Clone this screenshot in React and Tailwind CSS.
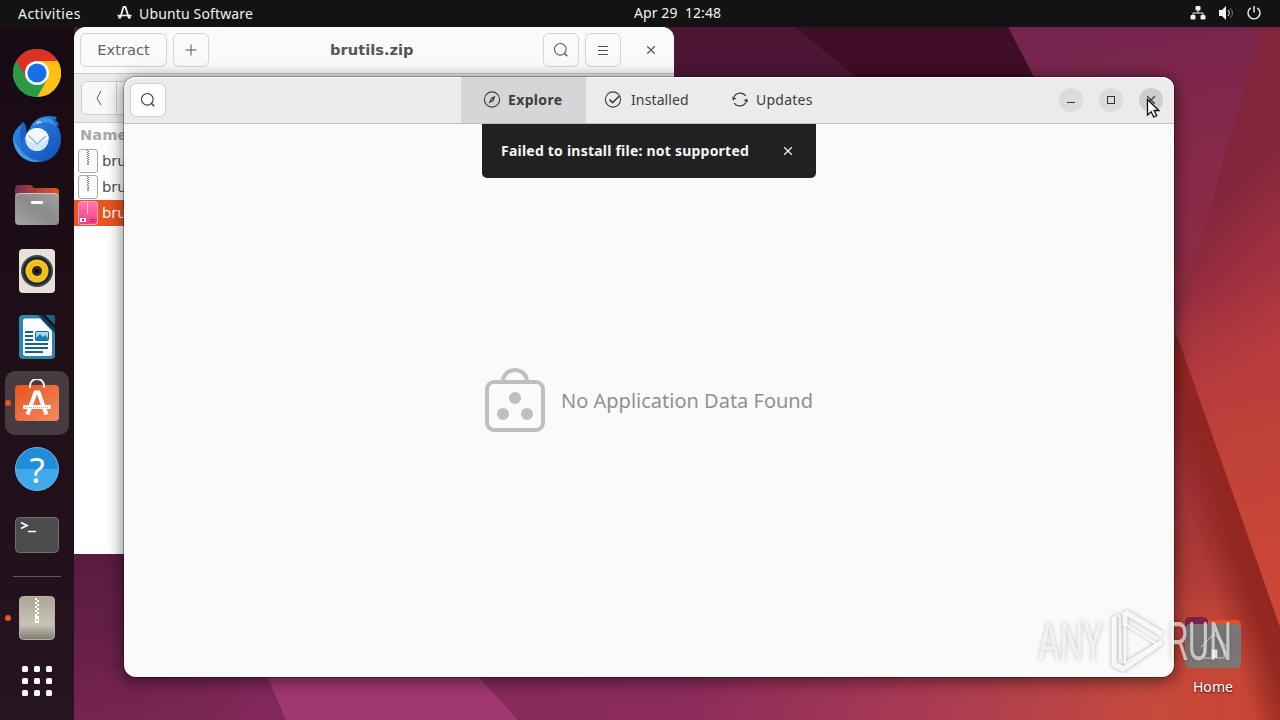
import React from "react";

const Wallpaper = () => (
  <svg className="absolute inset-0" width="1280" height="720" viewBox="0 0 1280 720">
    <defs>
      <linearGradient id="base" x1="0" y1="0" x2="0" y2="1">
        <stop offset="0" stopColor="#4b1534" />
        <stop offset="0.75" stopColor="#571a3d" />
        <stop offset="0.88" stopColor="#651f45" />
        <stop offset="1" stopColor="#76244f" />
      </linearGradient>
      <linearGradient id="floor" x1="74" y1="0" x2="1280" y2="0" gradientUnits="userSpaceOnUse">
        <stop offset="0" stopColor="#76244f" stopOpacity="0" />
        <stop offset="0.15" stopColor="#80285a" />
        <stop offset="0.5" stopColor="#8b2b5c" />
        <stop offset="0.7" stopColor="#a93a54" />
        <stop offset="0.9" stopColor="#c74a3d" />
        <stop offset="1" stopColor="#c84230" />
      </linearGradient>
      <linearGradient id="sky" x1="1010" y1="27" x2="1130" y2="700" gradientUnits="userSpaceOnUse">
        <stop offset="0" stopColor="#73244f" />
        <stop offset="0.2" stopColor="#84284a" />
        <stop offset="0.5" stopColor="#932e42" />
        <stop offset="0.8" stopColor="#ab3836" />
        <stop offset="1" stopColor="#c94b38" />
      </linearGradient>
      <linearGradient id="fold" x1="1190" y1="220" x2="1300" y2="330" gradientUnits="userSpaceOnUse">
        <stop offset="0" stopColor="#81253c" />
        <stop offset="0.5" stopColor="#9e3040" />
        <stop offset="1" stopColor="#b63a40" />
      </linearGradient>
      <linearGradient id="foldBottom" x1="1200" y1="290" x2="1275" y2="590" gradientUnits="userSpaceOnUse">
        <stop offset="0" stopColor="#b63b3c" stopOpacity="0" />
        <stop offset="0.5" stopColor="#bf4139" />
        <stop offset="1" stopColor="#cc4737" />
      </linearGradient>
      <linearGradient id="ridge" x1="1195" y1="540" x2="1262" y2="518" gradientUnits="userSpaceOnUse">
        <stop offset="0" stopColor="#8e241f" stopOpacity="0" />
        <stop offset="0.5" stopColor="#8e2520" stopOpacity="0.9" />
        <stop offset="1" stopColor="#94271f" />
      </linearGradient>
    </defs>
    <rect width="1280" height="720" fill="url(#base)" />
    <path d="M795 27H1060V90H872Z" fill="#3e0d26" />
    <path d="M74 670H1280V720H74Z" fill="url(#floor)" />
    <path d="M260 660H463L518 720H286Z" fill="#a23870" />
    <path d="M1008 27H1280V677H1160L1034 77Z" fill="url(#sky)" />
    <path d="M1174 600H1280V720H1174Z" fill="#c64736" opacity=".35" />
    <path d="M1262 27H1280V627L1175 330Z" fill="url(#fold)" />
    <path d="M1262 27H1280V627L1175 330Z" fill="url(#foldBottom)" />
    <path d="M1175 330L1280 627V720H1248L1170 440Z" fill="url(#ridge)" />
  </svg>
);

const SoftwareGlyph = () => (
  <svg width="16" height="16" viewBox="0 0 16 16" fill="none" stroke="#f2f2f2" strokeWidth="1.800">
    <path d="M3 13.500L6.500 2h2L12 13.500" strokeLinejoin="round" />
    <path d="M.5 10.500h14M2 10.500v3M13 10.500v3" strokeWidth="1.500" />
  </svg>
);

const SearchIcon = ({ color = "#3d3d3d" }) => (
  <svg width="16" height="16" viewBox="0 0 16 16" fill="none" stroke={color} strokeWidth="1.100">
    <circle cx="7.300" cy="7.300" r="5.800" />
    <path d="M11.300 11.300l3 3" strokeWidth="1.500" />
  </svg>
);

const CloseIcon = ({ color = "#3d3d3d" }) => (
  <svg width="10" height="10" viewBox="0 0 10 10" fill="none" stroke={color} strokeWidth="1.300">
    <path d="M1.200 1.200l7.600 7.600M8.800 1.200L1.200 8.800" />
  </svg>
);

const TopBar = () => (
  <header className="relative z-10 h-[27px] bg-[#131313] text-[#f2f2f2] text-[14px] leading-[27px] flex justify-between">
    <div className="flex w-[560px]">
      <span className="ml-[18px] w-[99px] tracking-[0.45px]">Activities</span>
      <span className="w-[22px] pt-[5px]"><SoftwareGlyph /></span>
      <span className="tracking-[0.15px]">Ubuntu Software</span>
    </div>
    <div className="absolute left-[634px] -top-px whitespace-pre tracking-[0.08px]">Apr 29  12:48</div>
    <div className="flex items-center gap-[12px] pr-[18px] pb-px">
      <svg width="16" height="16" viewBox="0 0 16 16" fill="#f2f2f2">
        <rect x="5.500" y="1" width="5" height="4.500" rx="1" />
        <rect x=".5" y="10" width="5" height="4.500" rx="1" />
        <rect x="10.500" y="10" width="5" height="4.500" rx="1" />
        <path d="M8 4v4M3 11V8h10v3" fill="none" stroke="#f2f2f2" />
      </svg>
      <svg width="16" height="16" viewBox="0 0 16 16" fill="#f2f2f2">
        <path d="M1 5h3l4-4v14l-4-4H1z" />
        <path d="M10 5c1.700 2 1.700 4 0 6" fill="none" stroke="#f2f2f2" />
        <path d="M12 3c3.200 3 3.200 7 0 10" fill="none" stroke="#7c7c7c" />
      </svg>
      <svg width="16" height="16" viewBox="0 0 16 16" fill="none" stroke="#f2f2f2" strokeWidth="1.400">
        <path d="M4.800 2.800a6 6 0 1 0 6.400 0M8 1v6.400" />
      </svg>
    </div>
  </header>
);

const ChromeIcon = () => (
  <svg width="48" height="48" viewBox="0 0 48 48">
    <circle cx="24" cy="24" r="24" fill="#2a9a48" />
    <path d="M24 24L3.200 12A24 24 0 0 1 44.800 12Z" fill="#dd3327" />
    <path d="M24 12H44.800A24 24 0 0 1 24 48L34.400 30Z" fill="#fdc015" />
    <path d="M3.200 12L13.600 30L24 24V12Z" fill="#dd3327" />
    <path d="M3.200 12L13.600 30Q17 36 24 36L34 30L24 48A24 24 0 0 1 3.200 12Z" fill="#2a9a48" />
    <circle cx="24" cy="24" r="12" fill="#fff" />
    <circle cx="24" cy="24" r="9.600" fill="#1a6fe8" />
  </svg>
);

const ThunderbirdIcon = () => (
  <svg width="48" height="48" viewBox="0 0 48 48">
    <defs>
      <linearGradient id="bird" x1="0" y1="0" x2="1" y2="1">
        <stop offset="0" stopColor="#2f8de8" />
        <stop offset="1" stopColor="#1250b4" />
      </linearGradient>
    </defs>
    <path d="M0 22C1 15 6 12 10 7c3 3 4 7 3 12l4-6C20 5 28 1 36 1c4 0 6 1 8 1l-2 3c2 1 3 3 4 5l-2 1c3 4 4 8 4 13 0 13-10 23-22 23C11 47 0 36 0 22Z" fill="url(#bird)" />
    <path d="M0 20c1 7 3 9 6 12 5 9 12 13 22 14C12 50-1 37 0 20Z" fill="#4597e8" />
    <path d="M10 7c3 3 4 7 3 12-3 4-4 8-3 12C6 24 6 14 10 7Z" fill="#1a5fc4" />
    <path d="M18 13C21 5 29 2 35 3c4 1 6 4 8 8-8-5-14-4-19-1-3 0-5 1-6 3Z" fill="#3d95ea" />
    <circle cx="24" cy="24.500" r="11.500" fill="#cfe9fb" />
    <path d="M12.500 24c0-6 5-11 11.500-11s12 5 12 11l-12 6Z" fill="#f1f9ff" />
    <path d="M15.500 20.500l8.500 8.500 9-8" fill="none" stroke="#86b9da" strokeWidth="1.300" />
    <path d="M24 8.500c1-2 3-2 4-.5" stroke="#d9efff" strokeWidth="1.300" fill="none" />
  </svg>
);

const FilesIcon = () => (
  <svg width="44" height="42" viewBox="0 0 44 42">
    <defs>
      <linearGradient id="files" x1="0" y1="1" x2="1" y2="0">
        <stop offset="0" stopColor="#a4a4a4" />
        <stop offset=".5" stopColor="#8b8b8b" />
        <stop offset="1" stopColor="#a0a0a0" />
      </linearGradient>
      <linearGradient id="tab">
        <stop offset="0" stopColor="#782c50" />
        <stop offset="1" stopColor="#e95420" />
      </linearGradient>
    </defs>
    <path d="M0 5q0-4 4-4h11q2 0 4 3h21q4 0 4 4v8H0Z" fill="url(#tab)" />
    <rect y="9" width="44" height="32" rx="4" fill="url(#files)" />
    <path d="M1 12q1-2.500 4-2.500h34q3 0 4 2.500" fill="none" stroke="#c6c6c6" />
    <rect x="16" y="17" width="12" height="3" rx="1" fill="#fff" />
  </svg>
);

const RhythmboxIcon = () => (
  <svg width="36" height="44" viewBox="0 0 36 44">
    <rect width="36" height="44" rx="4" fill="#e6e2d6" />
    <circle cx="18" cy="22" r="16" fill="#3f4752" />
    <circle cx="18" cy="22" r="14" fill="#20242c" />
    <circle cx="18" cy="22" r="11.500" fill="#f3c31f" />
    <circle cx="18" cy="22" r="8" fill="none" stroke="#e5b316" />
    <circle cx="18" cy="22" r="5" fill="#25292e" />
    <circle cx="18" cy="22" r="2" fill="#07090b" />
  </svg>
);

const WriterIcon = () => (
  <svg width="36" height="44" viewBox="0 0 36 44">
    <path d="M4 0H22L36 14V40q0 4-4 4H4q-4 0-4-4V4q0-4 4-4Z" fill="#2d86ab" />
    <path d="M22 0L36 14v4L19 0Z" fill="#0d3c5c" />
    <path d="M26 0h8q2 0 2 2v8Z" fill="#17608c" />
    <path d="M4 6q0-2.500 2.500-2.500H21L33 16v22.500q0 2.500-2.500 2.500h-24Q4 41 4 38.500Z" fill="#fafdff" />
    <path d="M6 17h8M6 21h8M6 25h8M6 29h23M6 33h23M6 37h18" stroke="#1a638c" strokeWidth="2" />
    <rect x="16.500" y="16.500" width="13" height="9" rx="1" fill="#a2d8f6" stroke="#17618d" />
    <path d="M17 25v-2l4-4 3 3 2-2 3 3v2Z" fill="#1b7fb4" />
  </svg>
);

const BagIcon = () => (
  <svg width="44" height="44" viewBox="0 0 44 44">
    <defs>
      <linearGradient id="bag" x1="0" y1="0" x2="1" y2="1">
        <stop offset="0" stopColor="#e8541f" />
        <stop offset="1" stopColor="#f38a5f" />
      </linearGradient>
    </defs>
    <rect y="6" width="44" height="36" rx="4" fill="url(#bag)" />
    <path d="M15 9v-2C15-2.500 29-2.500 29 7v2" fill="none" stroke="#f5eee9" strokeWidth="2" />
    <path d="M12.500 35.500l8-22h3l8 22" fill="none" stroke="#fff" strokeWidth="4" />
    <rect x="8" y="26" width="28" height="4" rx="1" fill="#fff" />
    <path d="M10 28.500h24" stroke="#f3a382" strokeDasharray="1 1" />
  </svg>
);

const HelpIcon = () => (
  <div className="size-[44px] rounded-full border border-[#73b9e8] bg-linear-to-b from-[#218ddb] from-50% to-[#3eaaea] to-50% text-white text-center font-normal text-[35px] leading-[43px]">
    ?
  </div>
);

const TerminalIcon = () => (
  <svg width="44" height="36" viewBox="0 0 44 36">
    <rect x=".5" y=".5" width="43" height="35" rx="4" fill="#4b4b4b" stroke="#707070" />
    <path d="M6 5.500l6 3-6 3M13 14.500h8" fill="none" stroke="#fff" strokeWidth="1.700" />
  </svg>
);

const ArchiveIcon = () => (
  <svg width="36" height="44" viewBox="0 0 36 44">
    <defs>
      <linearGradient id="arc" x1="0" y1="0" x2="0" y2="1">
        <stop offset="0" stopColor="#aca694" />
        <stop offset=".65" stopColor="#c9c4b8" />
        <stop offset="1" stopColor="#7d7a70" />
      </linearGradient>
    </defs>
    <rect x=".5" y=".5" width="35" height="43" rx="4" fill="url(#arc)" stroke="#b9b4a7" />
    <path d="M17 2v18" stroke="#fff" strokeWidth="2" strokeDasharray="2 2" />
    <path d="M19 4v18" stroke="#fff" strokeWidth="2" strokeDasharray="2 2" />
    <rect x="16" y="20" width="4" height="7" fill="#fff" />
    <path d="M18 23v2" stroke="#8e8979" />
  </svg>
);

const dockItems = [
  { name: "chrome", icon: <ChromeIcon /> },
  { name: "thunderbird", icon: <ThunderbirdIcon /> },
  { name: "files", icon: <FilesIcon /> },
  { name: "rhythmbox", icon: <RhythmboxIcon /> },
  { name: "writer", icon: <WriterIcon /> },
  { name: "software", icon: <BagIcon />, active: true },
  { name: "help", icon: <HelpIcon /> },
  { name: "terminal", icon: <TerminalIcon /> },
];

const Dock = () => (
  <nav className="relative z-10 w-[74px] h-[693px] pt-[13px] flex flex-col items-center bg-linear-to-b from-[#180a12] to-[#261420]">
    {dockItems.map((item) => (
      <div key={item.name} className="relative h-[66px] w-full flex items-center justify-center">
        <div className={item.active ? "size-[64px] rounded-[10px] bg-[#463b40] flex items-center justify-center pb-[4px]" : ""}>
          {item.icon}
        </div>
        {item.active && <span className="absolute left-[5px] size-[6px] rounded-full bg-[#e95420]" />}
      </div>
    ))}
    <div className="mt-[8px] mb-[8px] h-px w-[48px] bg-[#625860]" />
    <div className="relative h-[66px] w-full flex items-center justify-center">
      <span className="absolute left-[5px] size-[6px] rounded-full bg-[#e95420]" />
      <ArchiveIcon />
    </div>
    <div className="mt-[15px] grid grid-cols-3 gap-[6px]">
      {[...Array(9)].map((_, i) => (
        <span key={i} className="size-[6px] rounded-[1.5px] bg-white" />
      ))}
    </div>
  </nav>
);

const ZipFile = () => (
  <svg width="20" height="24" viewBox="0 0 20 24">
    <rect x=".5" y=".5" width="19" height="23" rx="2.500" fill="#f9f9f9" stroke="#a7a7a7" />
    <path d="M9.500 1v12" stroke="#777" strokeDasharray="1 1" />
    <path d="M10.500 2v12" stroke="#777" strokeDasharray="1 1" />
    <path d="M10 13v3" stroke="#888" strokeWidth="1.500" />
  </svg>
);

const DebFile = () => (
  <svg width="20" height="24" viewBox="0 0 20 24">
    <defs>
      <linearGradient id="deb" x1="0" y1="0" x2="0" y2="1">
        <stop offset="0" stopColor="#ff7ab0" />
        <stop offset="1" stopColor="#f23b87" />
      </linearGradient>
    </defs>
    <rect x=".5" y=".5" width="19" height="23" rx="2.500" fill="url(#deb)" stroke="#f9a2c5" />
    <path d="M9.500 1v12" stroke="#ffc2da" />
    <rect x="2" y="17" width="6" height="4" fill="#fff" />
    <path d="M4 19h2" stroke="#b02462" strokeWidth="2" />
    <path d="M12 18.500h6M12 20.500h6" stroke="#c52a6c" />
  </svg>
);

const ArchiveWindow = () => (
  <section className="absolute left-[74px] top-[27px] w-[600px] h-[527px] rounded-t-[12px] bg-white overflow-hidden font-['DejaVu_Sans',sans-serif] text-[14.67px] text-[#646464]">
    <div className="h-[47px] bg-[#fafafa] border-b border-[#c9c9c9] flex items-center px-[6px]">
      <div className="w-[87px] h-[34px] border border-[#d3d3d3] rounded-[6px] text-center leading-[32px]">Extract</div>
      <div className="ml-[6px] w-[36px] h-[34px] border border-[#d3d3d3] rounded-[6px] flex items-center justify-center">
        <svg width="12" height="12" viewBox="0 0 12 12" stroke="#555"><path d="M6 .5v11M.5 6h11" /></svg>
      </div>
      <div className="flex-1 pl-[121px] font-bold text-[#565656]">brutils.zip</div>
      <div className="w-[36px] h-[34px] border border-[#d3d3d3] rounded-[6px] flex items-center justify-center">
        <SearchIcon color="#606060" />
      </div>
      <div className="ml-[6px] w-[36px] h-[34px] border border-[#d3d3d3] rounded-[6px] flex items-center justify-center">
        <svg width="12" height="11" viewBox="0 0 12 11" stroke="#555"><path d="M1 1.500h10M1 5.500h10M1 9.500h10" /></svg>
      </div>
      <div className="w-[47px] pl-[25px]"><CloseIcon color="#606060" /></div>
    </div>
    <div className="h-[49px] bg-[#ebebeb] border-b border-[#cfcfcf] pl-[7px] pt-[7px]">
      <div className="w-[70px] h-[34px] border border-[#cdcdcd] rounded-[6px] bg-[#f8f8f8] flex items-center">
        <div className="w-[35px] h-full flex items-center justify-center border-r border-[#cdcdcd]">
          <svg width="8" height="16" viewBox="0 0 8 16" fill="none" stroke="#555"><path d="M6 .8L2 8l4 7.200" /></svg>
        </div>
      </div>
    </div>
    <div className="h-[25px] pl-[6px] leading-[24px] font-bold text-[#a9a9a9]">Name</div>
    <div className="h-[26px] pl-[4px] flex items-center gap-[4px] text-[#505050]"><ZipFile />brutils</div>
    <div className="h-[26px] pl-[4px] flex items-center gap-[4px] text-[#505050]"><ZipFile />brutils</div>
    <div className="h-[26px] pl-[4px] flex items-center gap-[4px] text-white bg-[#e95420]"><DebFile />brutils</div>
  </section>
);

const WindowButton = ({ children, dark }) => (
  <div className={`size-[24px] rounded-full flex items-center justify-center ${dark ? "bg-[#cecece]" : "bg-[#dcdcdc]"}`}>
    {children}
  </div>
);

const SoftwareWindow = () => (
  <section className="absolute left-[124px] top-[77px] w-[1050px] h-[600px] rounded-[12px] bg-[#fafafa] text-[#3d3d3d] text-[14px] shadow-[0_0_0_1px_rgba(0,0,0,0.28),0_3px_16px_2px_rgba(0,0,0,0.48)]">
    <div className="h-[47px] pb-px rounded-t-[12px] bg-[#ebebeb] border-b border-b-[#bfbfbf] shadow-[inset_0_1px_white] flex">
      <div className="w-[337px] pl-[6px] pt-[6px]">
        <div className="w-[36px] h-[34px] bg-white border border-[#cfcfcf] rounded-[6px] flex items-center justify-center">
          <SearchIcon />
        </div>
      </div>
      <div className="w-[125px] -mb-px bg-[#d6d6d6] flex items-center pb-px pl-[22px] font-bold">
        <svg width="18" height="18" viewBox="0 0 18 18" fill="none" stroke="#3d3d3d" strokeWidth="1.100">
          <circle cx="9" cy="8.500" r="7.600" />
          <path d="M12.500 4.500L10.500 10 5.500 12.500 8 7Z" fill="#3d3d3d" stroke="none" />
          <circle cx="8.800" cy="8.800" r=".8" fill="#d6d6d6" stroke="none" />
        </svg>
        <span className="ml-[7px] tracking-[0.35px]">Explore</span>
      </div>
      <div className="flex items-center pl-[18px] w-[127px]">
        <svg width="18" height="18" viewBox="0 0 18 18" fill="none" stroke="#3d3d3d" strokeWidth="1.100">
          <circle cx="9" cy="8.500" r="7.600" />
          <path d="M5.500 8.500l3 3L15.500 5" strokeWidth="1.700" />
        </svg>
        <span className="ml-[9px] tracking-[0.12px]">Installed</span>
      </div>
      <div className="flex items-center pl-[18px]">
        <svg width="18" height="18" viewBox="0 0 18 18" fill="none" stroke="#3d3d3d" strokeWidth="1.200">
          <path d="M3 6A6.800 6.800 0 0 1 14.800 5M15 11A6.800 6.800 0 0 1 3.200 12" />
          <path d="M1 5.500l.8 4L5.500 7.500ZM17 11.500l-.8-4L12.500 9.500Z" fill="#3d3d3d" stroke="none" />
        </svg>
        <span className="ml-[7px] tracking-[0.25px]">Updates</span>
      </div>
      <div className="ml-auto mr-[11px] flex items-center gap-[16px]">
        <WindowButton><span className="mt-[5px] h-px w-[8px] bg-[#333]" /></WindowButton>
        <WindowButton><span className="size-[8px] border border-[#333]" /></WindowButton>
        <WindowButton dark><CloseIcon /></WindowButton>
      </div>
    </div>

    <div className="mx-auto w-[334px] h-[54px] rounded-b-[5px] bg-[#212121] text-[#f5f5f5] font-bold flex items-center pl-[19px]">
      <span className="w-[282px] pb-[2px] whitespace-nowrap tracking-[0.22px]">Failed to install file: not supported</span>
      <CloseIcon color="#eee" />
    </div>

    <div className="mt-[190px] pl-[361px] flex items-center text-[#919191] text-[20px]">
      <svg width="60" height="64" viewBox="0 0 60 64" fill="none" stroke="#bfbfbf" strokeWidth="4">
        <rect x="2" y="14" width="56" height="48" rx="7" />
        <path d="M18 14C18-2 42-2 42 14" />
        <g fill="#bfbfbf" stroke="none">
          <circle cx="30" cy="30" r="6" />
          <circle cx="18" cy="46" r="6" />
          <circle cx="42" cy="46" r="6" />
        </g>
      </svg>
      <span className="ml-[16px] pt-[2px] whitespace-nowrap">No Application Data Found</span>
    </div>
  </section>
);

const HomeShortcut = () => (
  <div className="absolute left-[1173px] top-[617px] w-[80px] flex flex-col items-center text-white text-[14px]">
    <svg width="56" height="52" viewBox="0 0 56 52">
      <path d="M0 5q0-5 5-5h13q3 0 5 3h28q5 0 5 5v10H0Z" fill="#e4512b" />
      <path d="M0 5q0-5 5-5h13q3 0 5 3v15H0Z" fill="#792450" />
      <rect y="7" width="56" height="44" rx="5" fill="#7b7776" />
      <path d="M16 30l13-13 13 13M19 28v13h8v-8h5v8h7V28" fill="none" stroke="#b5b3b2" strokeWidth="1.300" />
      <path d="M27 33h5v8h-5z" fill="#f1f1f1" />
    </svg>
    <span className="mt-[7px] tracking-[0.1px] [text-shadow:0_1px_2px_rgba(0,0,0,0.8)]">Home</span>
  </div>
);

const Watermark = () => (
  <svg className="absolute left-[1030px] top-[600px] overflow-visible [filter:drop-shadow(0_0_2px_rgba(0,0,0,0.35))]" width="230" height="80" viewBox="0 0 230 80">
    <g fill="#ffffff" fillOpacity=".62" fontFamily="Roboto" fontWeight="400" fontSize="53">
      <text x="8" y="60" textLength="65" lengthAdjust="spacingAndGlyphs">ANY</text>
      <text x="138" y="60" textLength="64" lengthAdjust="spacingAndGlyphs">RUN</text>
    </g>
    <g fill="none" stroke="#ffffff" strokeOpacity=".85" strokeLinejoin="round" strokeWidth="5">
      <path d="M95 12l37 22" />
      <path d="M95 12v14" />
      <path d="M84 18v46l9 5 39-27" />
      <path d="M95 24l32 20-32 19Z" strokeWidth="2" />
      <path d="M82 18l8-3v44" strokeWidth="1.500" />
    </g>
  </svg>
);

const Cursor = () => (
  <svg className="absolute left-[1146px] top-[98px]" width="14" height="21" viewBox="0 0 14 21">
    <path d="M1.500 1.500v15.500l3.600-3.200 2.600 5.200 3-1.400-2.500-5.100h4.600Z" fill="#fff" stroke="#111" strokeWidth="1.300" />
  </svg>
);

export default function App() {
  return (
    <div className="relative w-[1280px] h-[720px] overflow-hidden font-['Noto_Sans',sans-serif]">
      <Wallpaper />
      <TopBar />
      <Dock />
      <HomeShortcut />
      <ArchiveWindow />
      <SoftwareWindow />
      <Watermark />
      <Cursor />
    </div>
  );
}
